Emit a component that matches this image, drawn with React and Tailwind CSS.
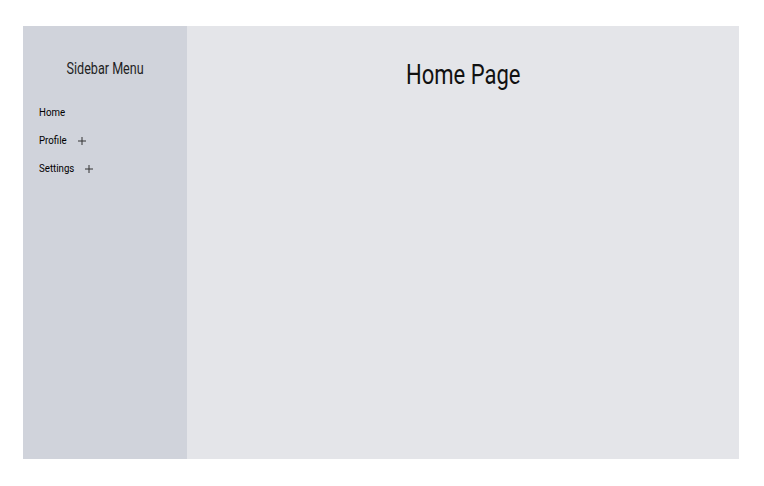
const Plus = () => (
  <svg width="8" height="8" viewBox="0 0 8 8" className="shrink-0">
    <path d="M4 0v8M0 4h8" stroke="#333" strokeWidth="1" />
  </svg>
);

export default function App() {
  return (
    <div className="min-h-screen bg-white pt-[26px] pl-[23px]" style={{ fontFamily: 'Roboto, "Noto Sans", sans-serif' }}>
      <div className="flex w-[716px] h-[433px]">
        {/* Sidebar */}
        <aside className="w-[164px] bg-[#d0d3db] pt-[32px] pl-[16px]">
          <h2 className="-ml-[16px] text-center text-[17px] text-[#1f1f1f] leading-[20px]">
            <span className="inline-block scale-x-[0.74]">Sidebar Menu</span>
          </h2>
          <ul className="mt-[21px] text-[11px] text-black">
            <li className="h-[28px] leading-[28px]">
              <span className="inline-block origin-left scale-x-[0.88]">Home</span>
            </li>
            <li className="h-[28px] flex items-center">
              <span className="w-[39px] origin-left scale-x-[0.88]">Profile</span>
              <Plus />
            </li>
            <li className="h-[28px] flex items-center">
              <span className="w-[46px] origin-left scale-x-[0.88]">Settings</span>
              <Plus />
            </li>
          </ul>
        </aside>

        {/* Main */}
        <main className="flex-1 bg-[#e4e5e9] pt-[33px]">
          <h1 className="text-center text-[27px] text-[#111] leading-[32px]">
            <span className="inline-block scale-x-[0.815]">Home Page</span>
          </h1>
        </main>
      </div>
    </div>
  );
}
